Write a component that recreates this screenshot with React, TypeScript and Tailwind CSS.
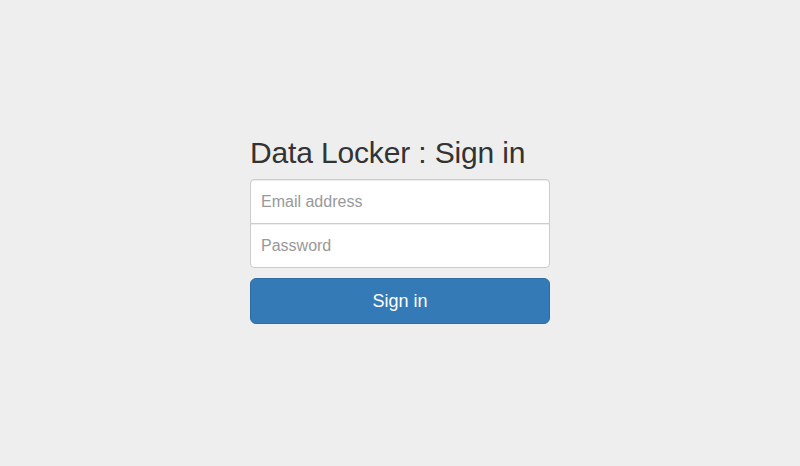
export default function App() {
  return (
    <div
      className="min-h-[466px] w-full bg-[#eeeeee] pt-[136px]"
      style={{ fontFamily: '"Liberation Sans", Arial, Helvetica, sans-serif' }}
    >
      <form className="mx-auto w-[300px]" onSubmit={(e) => e.preventDefault()}>
        <h2 className="mb-[10px] text-[30px] leading-[33px] font-normal tracking-[-0.15px] text-[#333333]">
          Data Locker : Sign in
        </h2>
        <input
          type="email"
          placeholder="Email address"
          className="relative -mb-px block h-[45px] w-full rounded-t-[4px] border border-[#cccccc] bg-white px-[10px] text-[16px] text-[#555555] shadow-[inset_0_1px_1px_rgba(0,0,0,0.075)] outline-none placeholder:text-[#999999]"
        />
        <input
          type="password"
          placeholder="Password"
          className="relative mb-[10px] block h-[45px] w-full rounded-b-[4px] border border-[#cccccc] bg-white px-[10px] text-[16px] text-[#555555] shadow-[inset_0_1px_1px_rgba(0,0,0,0.075)] outline-none placeholder:text-[#999999]"
        />
        <button
          type="submit"
          className="block h-[46px] w-full rounded-[6px] border border-[#2e6da4] bg-[#337ab7] text-[18px] text-white"
        >
          Sign in
        </button>
      </form>
    </div>
  );
}
